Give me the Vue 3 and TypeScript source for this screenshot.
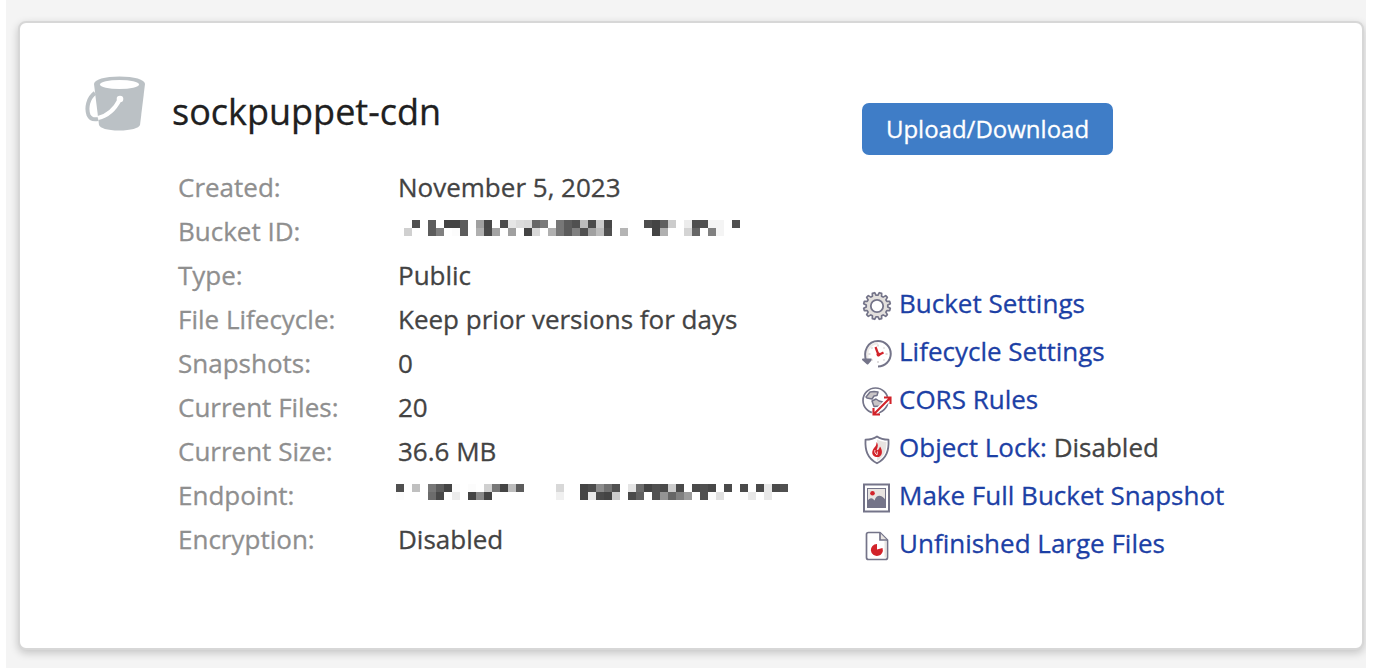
<script setup lang="ts">
interface Detail {
  label: string
  value?: string
  mosaic?: { kind: string; cells: Cell[] }
}
interface Cell {
  x: number
  y: number
  fill: string
}
interface Action {
  icon: string
  label: string
  note?: string
}

// Each row holds two hex digits per 8px block; ".." leaves a block empty.
function blocks(rows: string[]): Cell[] {
  return rows.flatMap((row, y) =>
    row
      .split(' ')
      .map((v, x) => ({ x: x * 8, y: y * 8, fill: v === '..' ? '' : `#${v}${v}${v}` }))
      .filter((c) => c.fill !== ''),
  )
}

const bucketId = blocks([
  '.. 4f .. 5c .. 44 44 5c .. a0 48 .. 4c e6 dc d8 66 7a .. 77 5c 50 bc 4a cc 48 .. fc .. .. 4e 44 60 cc .. ec 50 50 f4 f4 .. 50',
  'd0 .. .. 5c 80 .. fc 5c .. b0 4a a4 .. a0 .. 44 d8 .. b0 77 5c 80 50 a0 bc 50 .. b4 .. .. .. 44 b0 .. .. d4 66 .. 80 f4 .. ..',
])
const endpoint = blocks([
  '50 .. c0 .. 77 5c 44 fc .. fc .. d0 77 44 bc 5c .. .. .. .. d8 .. .. 44 4c 8c 70 50 .. e4 6c 44 50 4a cc 4a .. 4a 50 48 .. 4a .. 4a .. 4a e8 4a 50',
  'fc .. .. .. 6c 48 .. ec .. 44 88 44 .. .. .. .. .. .. .. .. f0 .. .. 44 e8 4a 44 cc .. 4a 60 .. 50 94 66 80 9c .. 50 fc e0 .. .. fc e8 .. e8 .. ..',
])

const details: Detail[] = [
  { label: 'Created:', value: 'November 5, 2023' },
  { label: 'Bucket ID:', mosaic: { kind: 'bucket-id', cells: bucketId } },
  { label: 'Type:', value: 'Public' },
  { label: 'File Lifecycle:', value: 'Keep prior versions for days' },
  { label: 'Snapshots:', value: '0' },
  { label: 'Current Files:', value: '20' },
  { label: 'Current Size:', value: '36.6 MB' },
  { label: 'Endpoint:', mosaic: { kind: 'endpoint', cells: endpoint } },
  { label: 'Encryption:', value: 'Disabled' },
]

const actions: Action[] = [
  { icon: 'gear', label: 'Bucket Settings' },
  { icon: 'clock', label: 'Lifecycle Settings' },
  { icon: 'globe', label: 'CORS Rules' },
  { icon: 'shield', label: 'Object Lock:', note: 'Disabled' },
  { icon: 'image', label: 'Make Full Bucket Snapshot' },
  { icon: 'file', label: 'Unfinished Large Files' },
]

// Outline of the gear: rounded teeth around a ring.
const gearPath = ((): string => {
  const teeth = 12
  const pts: string[] = []
  for (let i = 0; i < teeth; i++) {
    const steps: [number, number][] = [[-0.34, 10.8], [-0.17, 13.5], [0.17, 13.5], [0.34, 10.8]]
    for (const [d, r] of steps) {
      const a = ((i + 0.5 + d) / teeth) * Math.PI * 2
      pts.push(`${(15 + r * Math.sin(a)).toFixed(2)} ${(15 - r * Math.cos(a)).toFixed(2)}`)
    }
  }
  return `M${pts.join('L')}Z`
})()
</script>

<template>
  <main class="page">
    <section class="card">
      <div class="info">
        <header class="heading">
          <svg class="bucket" width="62" height="56" viewBox="0 0 62 56">
            <path d="M9 8C9 3.500 20 0.500 34.500 0.500S60 3.500 60 8L55 49C54 52 46 54.500 34 54.500S15 52 14 49Z" fill="#bbc1c5" />
            <ellipse cx="34.500" cy="8.500" rx="19.500" ry="4.500" fill="#fff" />
            <path d="M10 17C3 22 1 32 3.500 39C5 42.500 8 44 13 43" fill="none" stroke="#bbc1c5" stroke-width="4" />
            <path d="M13 42C22 40 30 33 35 23" fill="none" stroke="#fff" stroke-width="4" />
            <circle cx="35" cy="23" r="3.300" fill="#fff" />
          </svg>
          <h1>sockpuppet-cdn</h1>
        </header>
        <dl class="details">
          <template v-for="d in details" :key="d.label">
            <dt>{{ d.label }}</dt>
            <dd>
              <svg v-if="d.mosaic" :class="['mosaic', d.mosaic.kind]" width="392" height="16" shape-rendering="crispEdges">
                <rect v-for="(c, i) in d.mosaic.cells" :key="i" :x="c.x" :y="c.y" width="8" height="8" :fill="c.fill" />
              </svg>
              <span v-else>{{ d.value }}</span>
            </dd>
          </template>
        </dl>
      </div>
      <aside class="side">
        <button class="upload" type="button">Upload/Download</button>
        <ul class="actions">
          <li v-for="a in actions" :key="a.label">
            <svg class="icon" width="30" height="30" viewBox="0 0 30 30" fill="none" stroke="#747489" stroke-width="2">
              <template v-if="a.icon === 'gear'">
                <path :d="gearPath" fill="#e3e0dd" stroke-linejoin="round" stroke-width="1.700" />
                <circle cx="15" cy="15" r="6.200" fill="#fff" stroke-width="1.800" />
              </template>
              <template v-else-if="a.icon === 'clock'">
                <path d="M5.500 20V14A10 10 0 0 1 16 4.500" stroke="#eeeae7" stroke-width="2" />
                <path d="M4.500 23C0.500 12 6 2 16 2A12.600 12.600 0 0 1 16 27.500" />
                <path d="M1 20.500L5.500 24.500L9 20.500Z" fill="#747489" stroke-linejoin="round" stroke-width="2" />
                <path d="M16 5.500V7.500M16 22V24M6.500 15H8.500M23.500 15H25.500M9.500 8.500L10.500 9.500M22.500 8.500L21.500 9.500M22.500 21.500L21.500 20.500M9.500 21.500L10.500 20.500" stroke="#d5d1d2" stroke-width="1.500" />
                <path d="M13.500 8L16.500 16L21.500 13.500" stroke="#d2232a" stroke-width="2.200" />
                <circle cx="16.500" cy="15.500" r="2" fill="#d2232a" stroke="none" />
              </template>
              <template v-else-if="a.icon === 'globe'">
                <circle cx="13.500" cy="13.500" r="12.500" stroke-width="1.700" />
                <path d="M4 10L8 5L12 4.500L16 5L15 8.500L12 9L10 12L5 11ZM10 14L14 12L17 14L21 15L18 19L12 19.500Z" fill="#c9c5c6" stroke-width="1.500" stroke-linejoin="round" />
                <path d="M11 28L30 9" stroke="#fff" stroke-width="5" />
                <path d="M12 27L28 11M22 10.500H28.500V17M11.500 21V27.500H18" stroke="#d2232a" stroke-width="2.100" />
              </template>
              <template v-else-if="a.icon === 'shield'">
                <path d="M15 1.500C11.500 4 7.500 4.700 3.500 4.700C3 15 5 23 15 28.300C25 23 27 15 26.500 4.700C22.500 4.700 18.500 4 15 1.500Z" fill="#fff" stroke-width="1.800" stroke-linejoin="round" />
                <path d="M15 4.500C18 6 21 7 24.500 7C24.500 16 22 22 15 26Z" fill="#e8e4e1" stroke="none" />
                <path d="M14.500 7C16.500 9 16 12 14.800 14.500C15 16 17 15 18 11.500C20.500 15 21 20 17 22H14C10 21 9 17 12 13C14 11 14.500 9.500 14.500 7Z" fill="#d2232a" stroke="none" />
                <path d="M13 15C12 17 13.500 19 15 20L15.500 16.500" stroke="#fff" stroke-width=".8" />
              </template>
              <template v-else-if="a.icon === 'image'">
                <rect x="2" y="1.500" width="25" height="27" fill="#fff" />
                <rect x="5" y="5" width="19" height="20" fill="#e8e4e1" stroke="none" />
                <path d="M5 18.500C8 13.500 11 15 12.500 17.500C15 10.500 20 12 24 17.500V25H5Z" fill="#747489" stroke="none" />
                <rect x="5.500" y="5.500" width="18" height="19" stroke-width="1" />
                <circle cx="10.500" cy="10.300" r="2.300" fill="#d2232a" stroke="none" />
              </template>
              <template v-else>
                <path d="M6.500 1.500H18L25.500 9V26.500Q25.500 28.500 23.500 28.500H6.500Q4.500 28.500 4.500 26.500V3.500Q4.500 1.500 6.500 1.500Z" fill="#fff" stroke-width="1.700" stroke-linejoin="round" />
                <path d="M18 2V9H25" fill="#e8e4e1" stroke-width="1.700" />
                <path d="M23.500 10V26.500" stroke="#e8e4e1" />
                <path d="M15 13V18.500L20.500 17A6 6 0 1 1 15 13Z" fill="#d2232a" stroke="none" />
              </template>
            </svg>
            <span class="text"><a>{{ a.label }}</a>{{ a.note ? ' ' + a.note : '' }}</span>
          </li>
        </ul>
      </aside>
    </section>
  </main>
</template>

<style>
body {
  margin: 0;
  background: #fff;
}
</style>

<style scoped>
.page {
  box-sizing: border-box;
  width: 1360px;
  height: 668px;
  margin-left: 6px;
  padding: 21px 2px 18px 12px;
  overflow: hidden;
  background: #f4f4f4;
  font: 26px/44px "Open Sans", "Noto Sans", sans-serif;
  color: #434343;
  -webkit-text-stroke: 0.3px;
}
.card {
  box-sizing: border-box;
  display: flex;
  height: 629px;
  padding: 53px 0 0 65px;
  border: 2px solid #d7d7d7;
  border-radius: 8px;
  background: #fff;
  box-shadow: 0 3px 8px rgba(0, 0, 0, 0.2);
}
.info {
  width: 777px;
}
.heading {
  display: flex;
  height: 89px;
}
.bucket {
  flex: none;
  width: 62px;
}
h1 {
  margin: 8px 0 0 25px;
  font-size: 36px;
  font-weight: 400;
  line-height: 56px;
  color: #202020;
  white-space: nowrap;
}
.details {
  display: grid;
  grid-template-columns: 220px auto;
  grid-auto-rows: 44px;
  margin: 0 0 0 93px;
  white-space: nowrap;
}
dt {
  color: #8f8f8f;
}
dd {
  margin: 0;
}
.mosaic {
  display: block;
  margin-top: 11px;
}
.bucket-id {
  margin-left: 6px;
}
.endpoint {
  margin-left: -2px;
}
.side {
  padding-top: 27px;
}
.upload {
  display: block;
  width: 251px;
  height: 52px;
  padding: 0;
  border: 0;
  border-radius: 7px;
  background: #3f7dc7;
  font: 24px/52px "Open Sans", "Noto Sans", sans-serif;
  color: #fff;
  -webkit-text-stroke: 0.3px;
}
.actions {
  margin: 125px 0 0;
  padding: 0;
  list-style: none;
}
li {
  display: flex;
  align-items: center;
  gap: 7px;
  height: 48px;
  white-space: nowrap;
}
.icon {
  flex: none;
  margin-top: 3px;
}
.text {
  margin-bottom: 2px;
}
a {
  color: #1c40a5;
}
</style>
